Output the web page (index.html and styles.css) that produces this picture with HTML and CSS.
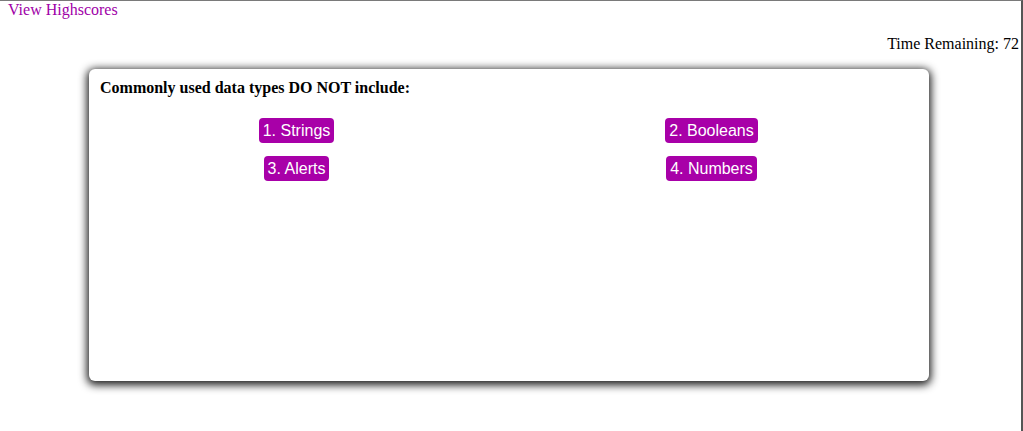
FILE: index.html
```html
<!DOCTYPE html>
<html lang="en">
<head>
<meta charset="utf-8">
<title>Quiz</title>
<link rel="stylesheet" href="styles.css">
</head>
<body>
<div class="frame">
  <header class="top">
    <a class="highscores" href="#">View Highscores</a>
  </header>
  <p class="timer">Time Remaining: 72</p>
  <main class="card">
    <h2 class="question">Commonly used data types DO NOT include:</h2>
    <div class="answers">
      <div class="cell"><button class="answer">1. Strings</button></div>
      <div class="cell"><button class="answer">2. Booleans</button></div>
      <div class="cell"><button class="answer">3. Alerts</button></div>
      <div class="cell"><button class="answer">4. Numbers</button></div>
    </div>
  </main>
</div>
</body>
</html>
```
FILE: styles.css
```css
html, body {
  margin: 0;
  padding: 0;
  background: #fff;
}
body {
  font-family: "Liberation Serif", "Times New Roman", serif;
  font-size: 16px;
  color: #000;
}
.frame {
  box-sizing: border-box;
  width: 1023px;
  height: 431px;
  border-top: 1px solid #7a7a7a;
  border-right: 2px solid #555;
  overflow: hidden;
}
.top {
  padding-left: 8px;
  line-height: 18px;
}
.highscores {
  color: #a000a8;
  text-decoration: none;
}
.timer {
  margin: 16px 0;
  padding-right: 2px;
  text-align: right;
  line-height: 18px;
}
.card {
  box-sizing: border-box;
  width: 840px;
  height: 312px;
  margin-left: 89px;
  padding: 10px 10px 0 0;
  background: #fff;
  border-radius: 6px;
  box-shadow: 0 2px 8px 2px rgba(0, 0, 0, 0.9);
}
.question {
  margin: 0 0 21px 11px;
  font-size: 16px;
  font-weight: bold;
  line-height: 18px;
}
.answers {
  display: grid;
  grid-template-columns: 415px 415px;
  row-gap: 13px;
}
.cell {
  display: flex;
  justify-content: center;
}
.answer {
  font-family: "Liberation Sans", Arial, sans-serif;
  font-size: 16px;
  line-height: 19px;
  color: #fff;
  background: #a800a8;
  border: none;
  border-radius: 4px;
  padding: 3px 4px;
  margin: 0;
}
```
